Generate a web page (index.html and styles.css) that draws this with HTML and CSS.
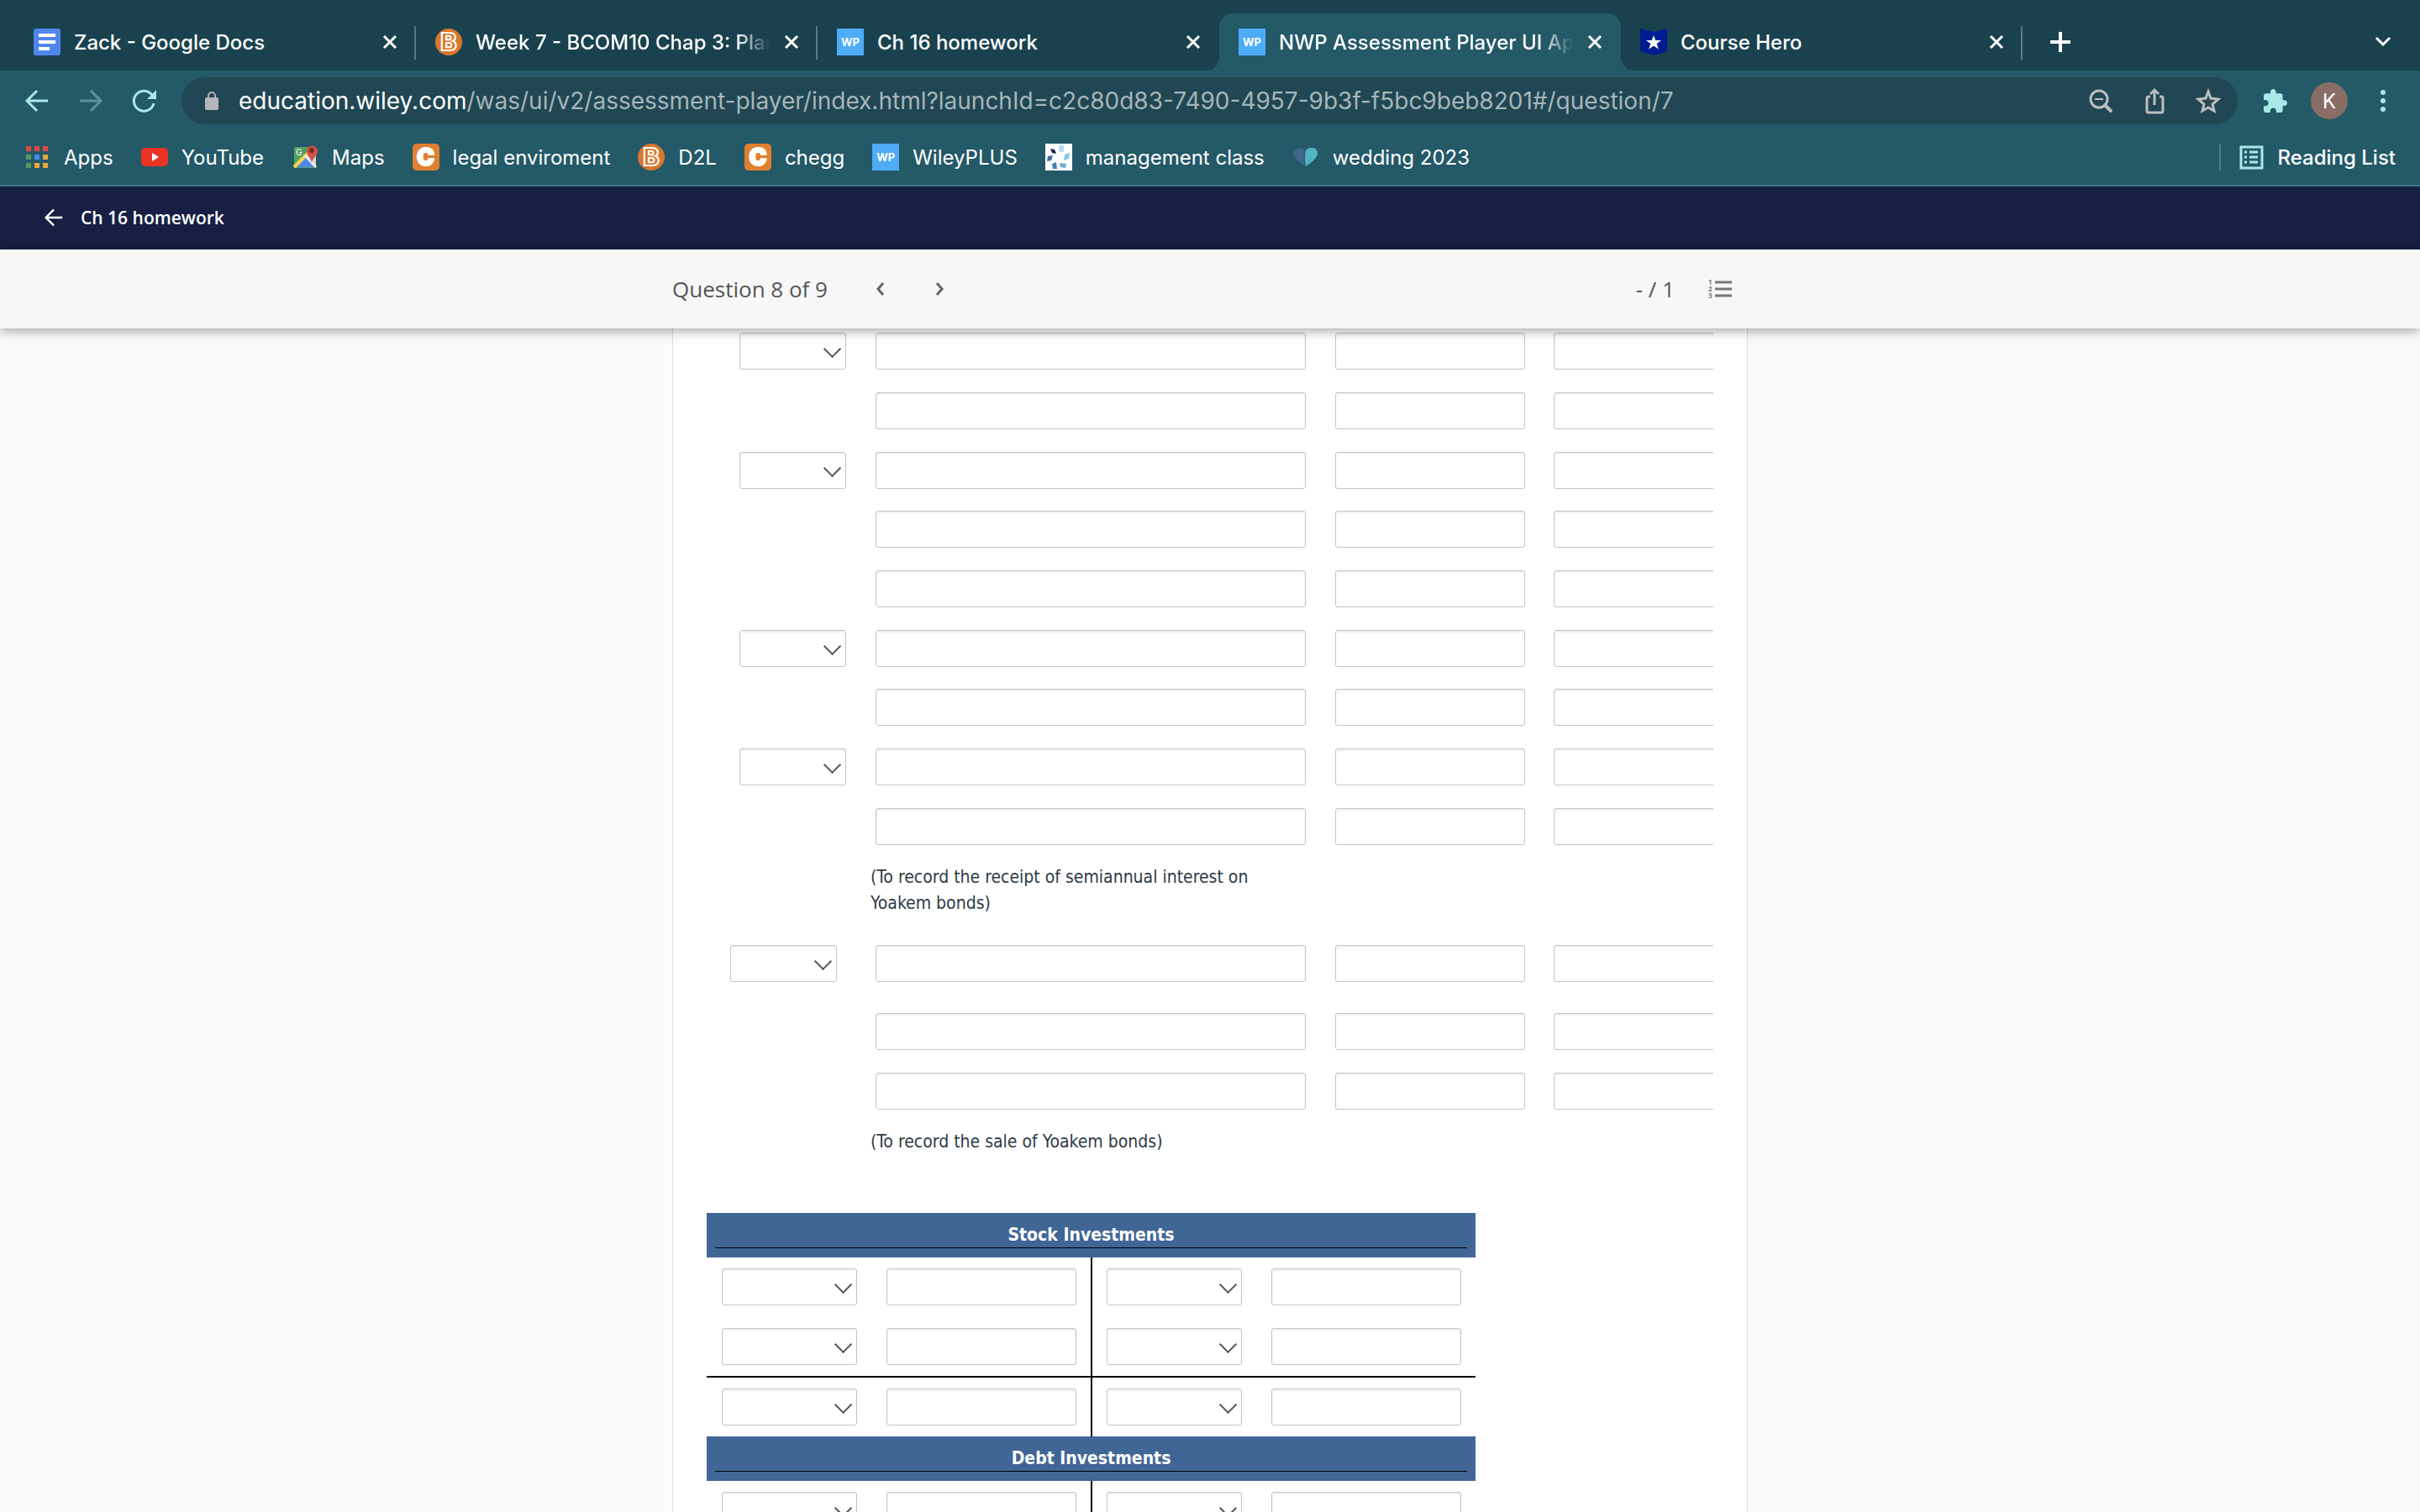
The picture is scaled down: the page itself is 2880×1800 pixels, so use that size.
FILE: index.html
```html
<!DOCTYPE html>
<html lang="en">
<head>
    <meta charset="UTF-8">
    <meta name="viewport" content="width=device-width, initial-scale=1.0">
    <title>NWP Assessment Player UI Application</title>
    <link rel="stylesheet" href="styles.css">
</head>
<body>
    <svg class="sprite" aria-hidden="true">
        <symbol id="close" viewBox="0 0 20 20"><path d="M3 3l14 14M17 3L3 17" fill="none" stroke="#fff" stroke-width="3"/></symbol>
        <symbol id="bcom" viewBox="0 0 32 32">
            <circle cx="16" cy="16" r="16" fill="#d9772e"/>
            <text x="16" y="26" text-anchor="middle" class="bcom-letter">B</text>
        </symbol>
        <symbol id="back" viewBox="0 0 28 28"><path d="M27 14H3M14 2L2 14l12 12" fill="none" stroke="currentColor" stroke-width="3"/></symbol>
    </svg>

    <header class="browser">
        <div class="tabs">
            <div class="tab">
                <svg class="icon" viewBox="0 0 32 32"><rect width="32" height="32" rx="3" fill="#5086ec"/><path d="M6 8h20M6 16h20M6 24h13" stroke="#fff" stroke-width="4"/></svg>
                <span class="tab-title">Zack - Google Docs</span>
                <button class="tab-close" aria-label="Close tab"><svg><use href="#close"/></svg></button>
            </div>
            <div class="tab">
                <svg class="icon"><use href="#bcom"/></svg>
                <span class="tab-title fade">Week 7 - BCOM10 Chap 3: Plan</span>
                <button class="tab-close" aria-label="Close tab"><svg><use href="#close"/></svg></button>
            </div>
            <div class="tab before-active">
                <span class="icon wp">WP</span>
                <span class="tab-title">Ch 16 homework</span>
                <button class="tab-close" aria-label="Close tab"><svg><use href="#close"/></svg></button>
            </div>
            <div class="tab active">
                <span class="icon wp">WP</span>
                <span class="tab-title fade">NWP Assessment Player UI App</span>
                <button class="tab-close" aria-label="Close tab"><svg><use href="#close"/></svg></button>
            </div>
            <div class="tab">
                <svg class="icon" viewBox="0 0 32 32"><path d="M0 0l16 4 16-4v27l-16 5-16-5z" fill="#001c93"/><path d="M16 8l2.200 6h6.800l-5.300 4 2 6.500L16 20.500l-5.700 4 2-6.500L7 14h6.800z" fill="#fff"/></svg>
                <span class="tab-title">Course Hero</span>
                <button class="tab-close" aria-label="Close tab"><svg><use href="#close"/></svg></button>
            </div>
            <button class="new-tab" aria-label="New tab"><svg viewBox="0 0 24 24"><path d="M12 0v24M0 12h24" stroke="#fff" stroke-width="4"/></svg></button>
            <button class="tab-search" aria-label="Search tabs"><svg viewBox="0 0 20 12"><path d="M2 1l8 8 8-8" fill="none" stroke="#fff" stroke-width="3"/></svg></button>
        </div>

        <div class="toolbar">
            <button aria-label="Back"><svg viewBox="0 0 28 28"><use href="#back"/></svg></button>
            <button class="disabled" aria-label="Forward"><svg viewBox="0 0 28 28"><path d="M1 14h24M14 2l12 12-12 12" fill="none" stroke="currentColor" stroke-width="3"/></svg></button>
            <button aria-label="Reload"><svg viewBox="0 0 28 28"><path d="M25 17a12 12 0 1 1-2-10" fill="none" stroke="currentColor" stroke-width="3"/><path d="M28 1v11H17z" fill="currentColor"/></svg></button>
            <div class="address">
                <svg class="lock" viewBox="0 0 16 22"><path d="M4 9V5a4 4 0 0 1 8 0v4" fill="none" stroke="#b4b6ba" stroke-width="2"/><rect y="7" width="16" height="15" rx="2" fill="#b4b6ba"/></svg>
                <div class="url"><span>education.wiley.com</span>/was/ui/v2/assessment-player/index.html?launchId=c2c80d83-7490-4957-9b3f-f5bc9beb8201#/question/7</div>
                <button aria-label="Zoom"><svg viewBox="0 0 28 28"><circle cx="12" cy="12" r="10" fill="none" stroke="currentColor" stroke-width="3"/><path d="M7 12h10" stroke="currentColor" stroke-width="2"/><path d="M18 18l9 9" stroke="currentColor" stroke-width="4"/></svg></button>
                <button aria-label="Share"><svg viewBox="0 0 28 28"><path d="M9 9H7a2 2 0 0 0-2 2v15a2 2 0 0 0 2 2h15a2 2 0 0 0 2-2V11a2 2 0 0 0-2-2h-2" fill="none" stroke="currentColor" stroke-width="3"/><path d="M14 19V2M9 6l5-5 5 5" fill="none" stroke="currentColor" stroke-width="3"/></svg></button>
                <button aria-label="Bookmark"><svg viewBox="0 0 28 28"><path d="M14 3l3 8 9 1-7 6 2 8-7-4-7 4 2-8-7-6 9-1z" fill="none" stroke="currentColor" stroke-width="3"/></svg></button>
            </div>
            <button aria-label="Extensions"><svg viewBox="2 1 21 21"><path d="M20.500 11H19V7c0-1.100-.9-2-2-2h-4V3.500C13 2.120 11.880 1 10.500 1S8 2.120 8 3.500V5H4c-1.100 0-2 .9-2 2v3.800h1.500c1.490 0 2.700 1.210 2.700 2.700s-1.210 2.700-2.700 2.700H2V20c0 1.100.9 2 2 2h3.800v-1.500c0-1.490 1.210-2.700 2.700-2.700s2.700 1.210 2.700 2.700V22H17c1.100 0 2-.9 2-2v-4h1.500c1.380 0 2.500-1.120 2.500-2.500S21.880 11 20.500 11z" fill="currentColor"/></svg></button>
            <button class="avatar" aria-label="Profile">K</button>
            <button aria-label="Menu"><svg viewBox="0 0 28 28"><g fill="currentColor"><circle cx="14" cy="4" r="3"/><circle cx="14" cy="14" r="3"/><circle cx="14" cy="24" r="3"/></g></svg></button>
        </div>

        <nav class="bookmarks">
            <a href="#"><svg class="icon apps" viewBox="0 0 26 26"><path d="M0 0h6v6H0zM10 0h6v6h-6zM20 0h6v6h-6z" fill="#e1493e"/><path d="M0 10h6v6H0zM0 20h6v6H0z" fill="#559d5c"/><path d="M10 10h6v6h-6z" fill="#4a8af4"/><path d="M20 10h6v6h-6zM10 20h6v6h-6zM20 20h6v6h-6z" fill="#e8a63a"/></svg>Apps</a>
            <a href="#"><svg class="icon" viewBox="0 0 32 32"><rect y="5" width="32" height="22" rx="5" fill="#ea3323"/><path d="M13 11l8 5-8 5z" fill="#fff"/></svg>YouTube</a>
            <a href="#"><svg class="icon" viewBox="0 0 32 32"><rect x="3" y="4" width="26" height="25" rx="2" fill="#559f62"/><path d="M29 29L16 16 29 8z" fill="#d8d8d8"/><path d="M4 28l13-13 13 13z" fill="#5086ec"/><path d="M3 28l17-17" stroke="#f7d84b" stroke-width="4"/><path d="M16 14l13 14" stroke="#eee" stroke-width="3"/><path d="M24 24c0-7-6-9-6-15a6 6 0 0 1 13 0c0 6-7 8-7 15z" fill="#d15142"/><circle cx="24" cy="8" r="3" fill="#772a24"/><text x="5" y="14" class="map-letter">G</text></svg>Maps</a>
            <a href="#"><span class="icon chegg">C</span>legal enviroment</a>
            <a href="#"><svg class="icon"><use href="#bcom"/></svg>D2L</a>
            <a href="#"><span class="icon chegg">C</span>chegg</a>
            <a href="#"><span class="icon wp">WP</span>WileyPLUS</a>
            <a href="#"><svg class="icon" viewBox="0 0 32 32"><rect width="32" height="32" fill="#fff"/><path d="M16 2h6v8h-6z" fill="#bddcf0"/><path d="M6 6l5 1 2 5-5-1z" fill="#14254d"/><path d="M3 15l6-1-2 6-5 1z" fill="#3b6ca0"/><path d="M8 24l5-2 1 8H9z" fill="#4183b5"/><path d="M17 23l8 1-1 5-6-1z" fill="#6aaed6"/><path d="M23 13l6-2-1 7-6 2z" fill="#8fc4e3"/></svg>management class</a>
            <a href="#"><svg class="icon" viewBox="0 0 32 32"><path d="M16 27C9 23 1 17 1 11c0-6 9-8 14-3z" fill="#41668a"/><path d="M16 27c-2-7-2-13 0-19 5-6 15-3 14 4-1 6-8 11-14 15z" fill="#52b3c4"/><path d="M16 27c-3-7-3-12 0-19-2 6-2 12 0 19z" fill="#163257"/></svg>wedding 2023</a>
            <a href="#" class="reading"><svg class="icon" viewBox="0 0 32 32"><rect x="4" y="4" width="25" height="25" fill="none" stroke="#a8e9e8" stroke-width="3"/><path d="M8 10h3M8 16h3M8 22h3M14 10h10M14 16h10M14 22h10" stroke="#a8e9e8" stroke-width="3"/></svg>Reading List</a>
        </nav>
    </header>

    <div class="app-bar">
        <a href="#"><svg viewBox="0 0 28 28"><use href="#back"/></svg>Ch 16 homework</a>
    </div>

    <div class="question-bar">
        <div class="question-inner">
            <span>Question 8 of 9</span>
            <button class="prev" aria-label="Previous question"><svg viewBox="0 0 16 16"><path d="M11 1L5 8l6 7" fill="none" stroke="#666" stroke-width="3"/></svg></button>
            <button class="next" aria-label="Next question"><svg viewBox="0 0 16 16"><path d="M5 1l6 7-6 7" fill="none" stroke="#666" stroke-width="3"/></svg></button>
            <span class="score">- / 1</span>
            <button class="list" aria-label="Question list"><svg viewBox="0 0 28 24"><path d="M8 4h20M8 12h20M8 20h20" stroke="#777" stroke-width="3"/><text x="0" y="7">1</text><text x="0" y="15">2</text><text x="0" y="23">3</text></svg></button>
        </div>
    </div>

    <main>
        <div class="question">
            <table class="journal">
                <colgroup><col class="date"><col class="account"><col class="amount"><col class="amount"></colgroup>
                <tbody id="interest"></tbody>
                <tbody><tr class="note"><td></td><td>(To record the receipt of semiannual interest on Yoakem bonds)</td></tr></tbody>
                <tbody id="sale"></tbody>
                <tbody><tr class="note"><td></td><td>(To record the sale of Yoakem bonds)</td></tr></tbody>
            </table>
            <table class="ledger">
                <colgroup><col class="debit-date"><col class="debit"><col class="credit-date"><col class="credit"></colgroup>
                <thead><tr><th colspan="4"><div>Stock Investments</div></th></tr></thead>
                <tbody class="entries"></tbody>
                <tbody><tr><th colspan="4"><div>Debt Investments</div></th></tr></tbody>
                <tbody class="entries"></tbody>
            </table>
        </div>
    </main>

    <script>
        const select = '<span class="select"><select aria-label="Date"><option></option></select></span>';

        function input(label) {
            return `<input type="text" aria-label="${label}">`;
        }

        // 1 = row starts with a date
        function journalRows(id, rows) {
            document.getElementById(id).innerHTML = rows.map(hasDate => `
                <tr>
                    <td>${hasDate ? select : ""}</td>
                    <td>${input("Account title")}</td>
                    <td>${input("Debit")}</td>
                    <td>${input("Credit")}</td>
                </tr>`).join("");
        }

        journalRows("interest", [1, 0, 1, 0, 0, 1, 0, 1, 0]);
        journalRows("sale", [1, 0, 0]);

        document.querySelectorAll(".entries").forEach(body => {
            const row = `<tr><td>${select}</td><td>${input("Debit")}</td><td>${select}</td><td>${input("Credit")}</td></tr>`;
            body.innerHTML = row.repeat(3);
        });
    </script>
</body>
</html>
```
FILE: styles.css
```css
* {
    box-sizing: border-box;
}
body {
    margin: 0;
    height: 100vh;
    display: flex;
    flex-direction: column;
    overflow: hidden;
    background-color: #fafafa;
    font-family: "Open Sans", sans-serif;
}
button {
    display: flex;
    align-items: center;
    justify-content: center;
    padding: 0;
    border: none;
    background: none;
    color: inherit;
    font: inherit;
    cursor: pointer;
}
a {
    color: inherit;
    text-decoration: none;
}
svg {
    display: block;
    overflow: visible;
}
.sprite {
    position: absolute;
    width: 0;
    height: 0;
}
.icon {
    width: 32px;
    height: 32px;
    flex: none;
}

/* browser */
.browser {
    flex: none;
    background-color: #245968;
    border-bottom: 2px solid #3c7a84;
    color: #fff;
    font-family: Inter, sans-serif;
    font-size: 24px;
    font-weight: 500;
}
.tabs {
    display: flex;
    height: 84px;
    padding: 16px 34px 0 17px;
    background-color: #1a424e;
}
.tab {
    position: relative;
    flex: 0 1 478px;
    min-width: 0;
    display: flex;
    align-items: center;
    gap: 16px;
    padding: 0 21px 0 23px;
}
.tab::after {
    content: "";
    position: absolute;
    right: 0;
    top: 15px;
    width: 2px;
    height: 40px;
    background-color: #5b7b83;
}
.tab.before-active::after {
    display: none;
}
.tab.active {
    background-color: #245968;
    border-radius: 16px 16px 0 0;
}
.tab.active::before,
.tab.active::after {
    content: "";
    position: absolute;
    top: auto;
    bottom: 0;
    width: 16px;
    height: 16px;
}
.tab.active::before {
    left: -16px;
    background: radial-gradient(circle at 0 0, #1a424e 16px, #245968 16px);
}
.tab.active::after {
    right: -16px;
    background: radial-gradient(circle at 100% 0, #1a424e 16px, #245968 16px);
}
.tab-title {
    flex: 1;
    overflow: hidden;
    white-space: nowrap;
}
.tab-title.fade {
    mask-image: linear-gradient(to right, #000 calc(100% - 40px), transparent);
}
.tab-close svg {
    width: 20px;
    height: 20px;
}
.new-tab {
    margin-left: 33px;
}
.new-tab svg {
    width: 24px;
    height: 24px;
}
.tab-search {
    margin-left: auto;
}
.tab-search svg {
    width: 20px;
    height: 12px;
}
.wp {
    display: flex;
    align-items: center;
    justify-content: center;
    background-color: #4dacf5;
    font-size: 13px;
    font-weight: 700;
}
.chegg {
    display: flex;
    align-items: center;
    justify-content: center;
    border-radius: 5px;
    background-color: #e08131;
    font-size: 28px;
    font-weight: 900;
    line-height: 32px;
    -webkit-text-stroke: 2px #fff;
}
.bcom-letter {
    fill: #d9772e;
    stroke: #fff;
    stroke-width: 2px;
    font: 700 28px "DejaVu Sans", sans-serif;
}
.map-letter {
    fill: #fff;
    font-size: 10px;
}
.toolbar {
    display: flex;
    align-items: center;
    gap: 36px;
    height: 72px;
    padding: 0 30px;
    color: #a8e9e8;
}
.toolbar svg {
    width: 28px;
    height: 28px;
}
.toolbar .disabled {
    color: #5f9199;
}
.address {
    flex: 1;
    min-width: 0;
    display: flex;
    align-items: center;
    gap: 36px;
    height: 56px;
    margin-right: -5px;
    margin-left: -6px;
    padding: 0 21px 0 28px;
    border-radius: 28px;
    background-color: #204753;
    color: #bdbdbf;
}
.address .lock {
    width: 16px;
    height: 22px;
}
.url {
    flex: 1;
    margin-left: -12px;
    overflow: hidden;
    white-space: nowrap;
    color: #a6b5ba;
    font-size: 28px;
    font-weight: 400;
}
.url span {
    color: #fff;
}
.avatar {
    width: 44px;
    height: 44px;
    margin: 0 -8px;
    border-radius: 50%;
    background-color: #886e65;
    color: #fff;
    font-weight: 400;
}
.bookmarks {
    display: flex;
    align-items: center;
    gap: 33px;
    height: 64px;
    padding: 0 29px 2px 28px;
    font-weight: 400;
}
.bookmarks a {
    display: flex;
    align-items: center;
    gap: 16px;
    white-space: nowrap;
}
.bookmarks .apps {
    padding: 3px;
}
.bookmarks .reading {
    height: 32px;
    margin-left: auto;
    padding-left: 20px;
    border-left: 2px solid #4c7f89;
    font-weight: 500;
}

/* assessment player */
.app-bar {
    flex: none;
    display: flex;
    align-items: center;
    height: 75px;
    padding: 0 53px 2px;
    background-color: #172043;
    color: #fff;
    font-size: 21px;
    font-weight: 600;
}
.app-bar a {
    display: flex;
    align-items: center;
    gap: 21px;
}
.app-bar svg {
    width: 22px;
    height: 22px;
}
.question-bar {
    position: relative;
    z-index: 1;
    flex: none;
    background-color: #f7f7f7;
    box-shadow: 0 2px 14px rgba(0, 0, 0, 0.4);
    color: #555;
    font-size: 26px;
}
.question-inner {
    display: flex;
    align-items: center;
    max-width: 1280px;
    height: 94px;
    margin: 0 auto;
    padding: 0 19px 1px 0;
}
.question-bar svg {
    width: 16px;
    height: 16px;
}
.prev {
    margin-left: 55px;
}
.next {
    margin-left: 54px;
}
.score {
    margin-left: auto;
}
.question-bar .list {
    margin-left: 40px;
}
.question-bar .list svg {
    width: 28px;
    height: 24px;
}
.list text {
    fill: #777;
    font-size: 8px;
    font-weight: 700;
}
main {
    flex: 1;
    min-height: 0;
    width: 100%;
    max-width: 1280px;
    margin: 0 auto;
    padding: 0 40px;
    overflow: hidden;
    border: 1px solid #ddd;
    border-width: 0 1px;
    background-color: #fff;
    color: #2d3b45;
    font-family: "DejaVu Sans Condensed", "DejaVu Sans", sans-serif;
    font-stretch: condensed;
    font-size: 21px;
    line-height: 31px;
}
.question {
    overflow: hidden;
}
table {
    table-layout: fixed;
    border-spacing: 0;
}
td {
    padding: 0;
    vertical-align: top;
}
input,
select {
    display: block;
    width: 226px;
    height: 44px;
    margin: 0;
    padding: 0 8px;
    border: 1px solid #c4c4c4;
    border-radius: 3px;
    background-color: #fff;
    box-shadow: inset 0 2px 2px rgba(0, 0, 0, 0.06);
    font: inherit;
    appearance: none;
}
.select {
    position: relative;
    display: block;
    width: 127px;
}
.select select {
    width: 100%;
}
.select::after {
    content: "";
    position: absolute;
    top: 12px;
    right: 9px;
    width: 13px;
    height: 13px;
    border: solid #555;
    border-width: 0 2px 2px 0;
    transform: rotate(45deg);
    pointer-events: none;
}
.journal {
    width: 1252px;
}
.journal .date {
    width: 185px;
}
.journal .account {
    width: 547px;
}
.journal .amount {
    width: 260px;
}
.journal tr {
    height: 71px;
}
.journal tr:nth-child(3n) {
    height: 70px;
}
.journal td {
    padding: 5px 0 0 16px;
}
.journal td:first-child {
    padding-left: 39px;
}
.journal td:nth-child(2) input {
    width: 512px;
}
.journal #sale td:first-child {
    padding-left: 28px;
}
.journal #sale tr:first-child {
    height: 81px;
}
.journal .note {
    height: 93px;
}
.journal .note td {
    padding: 2px 50px 0 10px;
}
.ledger {
    width: 915px;
    margin-top: 9px;
}
.ledger .debit-date {
    width: 196px;
}
.ledger .debit {
    width: 263px;
}
.ledger .credit-date {
    width: 195px;
}
.ledger .credit {
    width: 261px;
}
.ledger th {
    padding: 11px 10px;
    background-color: #406696;
    color: #fff;
    font-weight: 700;
}
.ledger th div {
    border-bottom: 1px solid #000;
    line-height: 30px;
}
.ledger td {
    padding: 13px 0 13px 18px;
}
.ledger td:nth-child(2) {
    border-right: 2px solid #000;
}
.ledger td:nth-child(3) {
    padding-left: 17px;
}
.entries tr:first-child {
    height: 71px;
}
.entries tr:nth-child(2) td {
    border-bottom: 2px solid #000;
}
.ledger .select {
    width: 161px;
}
```
